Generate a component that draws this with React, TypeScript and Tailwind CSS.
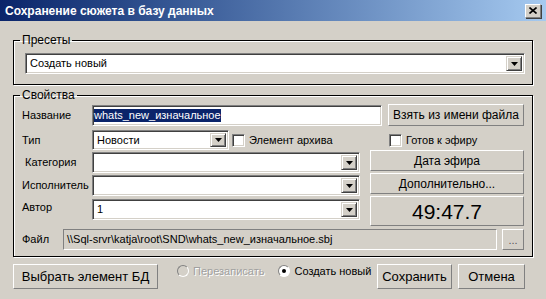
import React from 'react';

const sunken =
  'border border-t-[#808080] border-l-[#808080] border-b-white border-r-white shadow-[inset_1px_1px_0_#404040,inset_-1px_-1px_0_#d4d0c8]';
const button =
  'border border-t-white border-l-white border-b-[#808080] border-r-[#808080] bg-[#d4d0c8]';

function DropArrow() {
  return (
    <div className="w-[16px] h-full flex items-center justify-center bg-[#d4d0c8] border border-t-[#d4d0c8] border-l-[#d4d0c8] border-b-[#404040] border-r-[#404040] shadow-[inset_1px_1px_0_#fff,inset_-1px_-1px_0_#808080]">
      <svg width="7" height="4" viewBox="0 0 7 4">
        <path d="M0 0h7L3.5 4z" fill="#000" />
      </svg>
    </div>
  );
}

function Combo({ value, className }: { value?: string; className: string }) {
  return (
    <div className={`${sunken} ${className} bg-white flex items-stretch p-[2px]`}>
      <div className="flex-1 flex items-center pl-[2px] leading-none whitespace-nowrap">{value}</div>
      <DropArrow />
    </div>
  );
}

function CheckBox() {
  return <div className={`${sunken} w-[13px] h-[13px] bg-white shrink-0`} />;
}

function Radio({ checked, disabled }: { checked?: boolean; disabled?: boolean }) {
  return (
    <div
      className={`w-[12px] h-[12px] shrink-0 rounded-full border border-t-[#808080] border-l-[#808080] border-b-white border-r-white flex items-center justify-center ${
        disabled ? 'bg-[#d4d0c8]' : 'bg-white'
      }`}
    >
      {checked && <div className="w-[4px] h-[4px] rounded-full bg-black" />}
    </div>
  );
}

export default function App() {
  return (
    <div className="w-[546px] h-[299px] overflow-hidden bg-[#d4d0c8] text-black text-[11px] font-['Liberation_Sans',Arial,sans-serif] whitespace-nowrap">
      {/* заголовок окна */}
      <div className="h-[21px] flex items-center justify-between pl-[5px] pr-[5px] bg-linear-to-r from-[#0a246a] to-[#a6caf0]">
        <span className="text-white font-bold text-[12px] leading-none">Сохранение сюжета в базу данных</span>
        <div className={`w-[16px] h-[14px] flex items-center justify-center ${button} shadow-[1px_1px_0_#404040]`}>
          <svg width="8" height="7" viewBox="0 0 8 7">
            <path d="M0.5 0.5L7.5 6.5M7.5 0.5L0.5 6.5" stroke="#000" strokeWidth="1.6" />
          </svg>
        </div>
      </div>

      {/* Пресеты */}
      <fieldset className="ml-[13px] mt-[12px] w-[520px] p-0 border border-black shadow-[1px_1px_0_#fff,inset_1px_1px_0_#fff]">
        <legend className="ml-[6px] px-[2px] leading-[14px] text-[12px]">Пресеты</legend>
        <div className="pl-[11px] pr-[7px] pt-[6px] pb-[10px]">
          <Combo value="Создать новый" className="w-[500px] h-[21px]" />
        </div>
      </fieldset>

      {/* Свойства */}
      <fieldset className="ml-[13px] mt-[3px] w-[520px] p-0 border border-black shadow-[1px_1px_0_#fff,inset_1px_1px_0_#fff]">
        <legend className="ml-[6px] px-[2px] leading-[14px] text-[12px]">Свойства</legend>
        <div className="pl-[8px] pr-[8px] pb-[6px] flex flex-col">
          <div className="mt-[2px] h-[22px] flex items-center">
            <span className="w-[70px]">Название</span>
            <div className={`${sunken} bg-white w-[290px] h-[21px] mt-[1px] flex items-center px-[1px]`}>
              <span className="bg-[#0a246a] text-white leading-[13px]">whats_new_изначальное</span>
            </div>
            <div className={`${button} ml-auto w-[136px] h-[22px] flex items-center justify-center text-[12px]`}>
              Взять из имени файла
            </div>
          </div>

          <div className="mt-[4px] h-[20px] flex items-center">
            <span className="w-[70px]">Тип</span>
            <Combo value="Новости" className="w-[137px] h-[20px]" />
            <div className="ml-[3px] flex items-center gap-[4px]">
              <CheckBox />
              <span>Элемент архива</span>
            </div>
            <div className="ml-auto w-[136px] flex items-center gap-[4px] pl-[1px]">
              <CheckBox />
              <span>Готов к эфиру</span>
            </div>
          </div>

          <div className="flex gap-[10px]">
            <div className="w-[338px] flex flex-col pt-[2px]">
              <div className="h-[21px] flex items-center">
                <span className="w-[70px] pl-[3px]">Категория</span>
                <Combo className="w-[268px] h-[21px]" />
              </div>
              <div className="mt-[2px] h-[21px] flex items-center">
                <span className="w-[70px]">Исполнитель</span>
                <Combo className="w-[268px] h-[21px]" />
              </div>
              <div className="mt-[3px] h-[21px] flex items-center">
                <span className="w-[70px] self-start">Автор</span>
                <Combo value="1" className="w-[268px] h-[21px]" />
              </div>
            </div>
            <div className="w-[154px] flex flex-col">
              <div className={`${button} h-[21px] flex items-center justify-center text-[12px]`}>Дата эфира</div>
              <div className={`${button} mt-[2px] h-[21px] flex items-center justify-center text-[12px]`}>
                Дополнительно...
              </div>
              <div className={`${button} mt-[2px] h-[30px] flex items-center justify-center text-[21px] leading-none`}>
                49:47.7
              </div>
            </div>
          </div>

          <div className="mt-[3px] h-[21px] flex items-center">
            <span className="w-[41px]">Файл</span>
            <div className="w-[434px] h-[21px] flex items-center px-[3px] bg-[#d4d0c8] border border-t-[#808080] border-l-[#808080] border-b-white border-r-white">
              \\Sql-srvr\katja\root\SND\whats_new_изначальное.sbj
            </div>
            <div className={`${button} ml-[5px] w-[22px] h-[21px] flex items-end justify-center pb-[3px] text-[11px] leading-none text-[#555]`}>
              ...
            </div>
          </div>
        </div>
      </fieldset>

      {/* нижняя панель */}
      <div className="mt-[7px] ml-[13px] w-[512px] flex items-start">
        <div className={`${button} w-[145px] h-[25px] flex items-center justify-center text-[13px]`}>
          Выбрать элемент БД
        </div>
        <div className="ml-[19px] flex items-center gap-[4px] h-[14px]">
          <Radio disabled />
          <span className="text-[#a0a0a0] [text-shadow:1px_1px_0_#fff]">Перезаписать</span>
        </div>
        <div className="ml-[14px] flex items-center gap-[4px] h-[14px]">
          <Radio checked />
          <span>Создать новый</span>
        </div>
        <div className={`${button} ml-auto w-[75px] h-[25px] flex items-center justify-center text-[13px]`}>
          Сохранить
        </div>
        <div className={`${button} ml-[6px] w-[67px] h-[25px] flex items-center justify-center text-[13px]`}>
          Отмена
        </div>
      </div>
    </div>
  );
}
